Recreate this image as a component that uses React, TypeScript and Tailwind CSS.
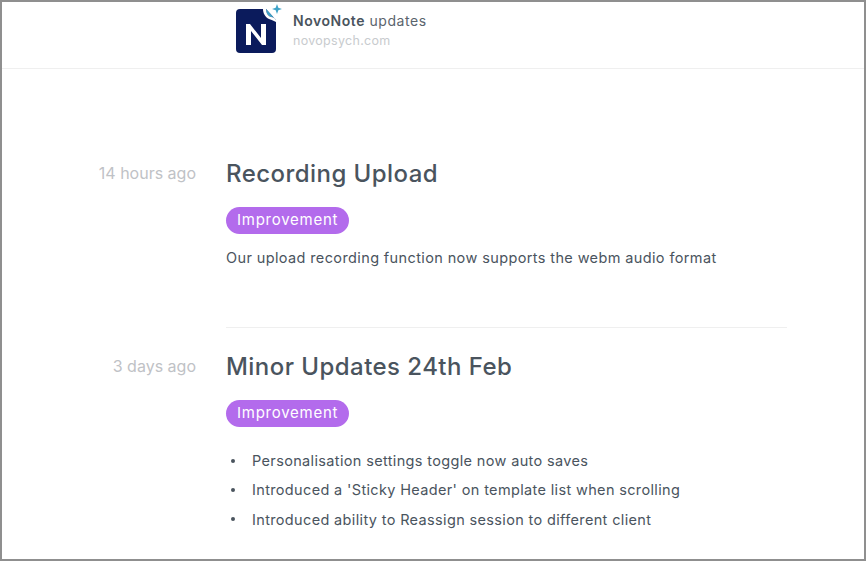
const Tag = () => (
  <span className="inline-block h-[27px] rounded-full bg-[#b36bec] px-[11px] text-[15px] leading-[26px] tracking-[0.75px] text-white">
    Improvement
  </span>
);

const Logo = () => (
  <svg width="46" height="49" viewBox="0 0 46 49" className="shrink-0">
    <path d="M4 5h26l10 11v29a4 4 0 0 1-4 4H4a4 4 0 0 1-4-4V9a4 4 0 0 1 4-4z" fill="#0b1b5c" />
    <path d="M30 5l10 11c-1-2-3-3-5-3-3-1-5-4-5-8z" fill="#3fa3c8" />
    <path d="M30 5c0 4 2 7 5 8 2 0 4 1 5 3v2c-2-1-4-2-7-3-4-2-6-6-6-10z" fill="#fff" />
    <path d="M41 0l1.3 3.7L46 5l-3.7 1.3L41 10l-1.3-3.7L36 5l3.7-1.3z" fill="#3fa3c8" />
    <path d="M10 41V20h4l11 14V20h5v21h-4L15 27v14z" fill="#fff" />
  </svg>
);

const Dot = () => <span className="mr-[17px] ml-[5px] h-[4px] w-[4px] shrink-0 rounded-full bg-[#4a545e]" />;

const App = () => {
  return (
    <div className="h-[561px] w-[866px] overflow-hidden border-2 border-[#8f8f8f] bg-white font-['Inter',sans-serif] text-[#4a545e]">
      {/* Header */}
      <div className="flex h-[67px] items-start border-b border-[#efefef] pl-[234px]">
        <div className="mt-[2px]"><Logo /></div>
        <div className="ml-[11px] mt-[9px]">
          <div className="text-[14px] leading-5 tracking-[0.55px] text-[#5a646d]">
            <span className="font-semibold text-[#4a545e]">NovoNote</span> updates
          </div>
          <div className="mt-[1px] text-[12.5px] leading-[18px] tracking-[0.3px] text-[#c8cbce]">novopsych.com</div>
        </div>
      </div>

      {/* Entries */}
      <div className="pt-[86px]">
        <div className="flex">
          <div className="w-[194px] shrink-0 pt-[6px] text-right text-[16px] leading-6 text-[#bfc2c6]">14 hours ago</div>
          <div className="ml-[30px] w-[561px] border-b border-[#efefef] pb-[57px]">
            <h2 className="text-[24px] font-medium leading-[38px] tracking-[0.45px]">Recording Upload</h2>
            <div className="mt-[14px] flex"><Tag /></div>
            <p className="mt-[12px] text-[14.5px] leading-6 tracking-[0.38px]">Our upload recording function now supports the webm audio format</p>
          </div>
        </div>

        <div className="mt-[20px] flex">
          <div className="w-[194px] shrink-0 pt-[6px] text-right text-[16px] leading-6 text-[#bfc2c6]">3 days ago</div>
          <div className="ml-[30px] w-[561px]">
            <h2 className="text-[24px] font-medium leading-[38px] tracking-[0.45px]">Minor Updates 24th Feb</h2>
            <div className="mt-[14px] flex"><Tag /></div>
            <ul className="mt-[19px] text-[14.5px] leading-[29.3px] tracking-[0.35px]">
              <li className="flex items-center"><Dot />Personalisation settings toggle now auto saves</li>
              <li className="flex items-center"><Dot />Introduced a 'Sticky Header' on template list when scrolling</li>
              <li className="flex items-center"><Dot />Introduced ability to Reassign session to different client</li>
            </ul>
          </div>
        </div>
      </div>
    </div>
  );
};

export default App;
